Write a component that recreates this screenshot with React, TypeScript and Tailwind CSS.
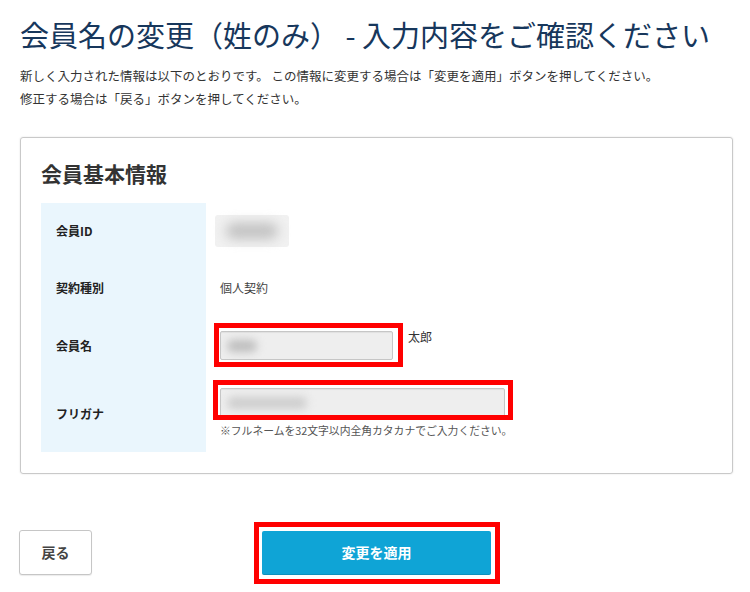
import React from 'react';

const Blur: React.FC<{ w: string; tone?: string }> = ({ w, tone = 'bg-[#c4c4c4]' }) => (
  <span className={`block h-[12px] rounded-full blur-[4px] ${w} ${tone}`} />
);

const App: React.FC = () => {
  return (
    <div className="w-[750px] h-[592px] overflow-hidden bg-white font-['Noto_Sans_CJK_JP','Noto_Sans',sans-serif] text-[#333]">
      <div className="pl-[20px] pr-[17px] pt-[14px]">
        {/* Title */}
        <h1 className="whitespace-nowrap text-[29px] leading-[40px] font-normal text-[#17375c]">
          会員名の変更（姓のみ） - 入力内容をご確認ください
        </h1>
        <p className="mt-[10px] whitespace-nowrap text-[12.5px] leading-[23px] text-[#333]">
          新しく入力された情報は以下のとおりです。 この情報に変更する場合は「変更を適用」ボタンを押してください。
          <br />
          修正する場合は「戻る」ボタンを押してください。
        </p>

        {/* Card */}
        <div className="mt-[27px] rounded-[3px] border border-[#c9c9c9] px-[20px] pt-[21px] pb-[21px] shadow-[0_0_2px_rgba(0,0,0,0.12)]">
          <h2 className="text-[21px] leading-[28px] font-bold text-[#333]">会員基本情報</h2>

          <div className="mt-[16px] grid grid-cols-[165px_1fr]">
            {/* 会員ID */}
            <div className="flex h-[56px] items-center bg-[#eaf6fd] pl-[15px] text-[12px] font-bold text-[#222]">会員ID</div>
            <div className="flex h-[56px] items-center pl-[9px]">
              <div className="flex h-[32px] w-[74px] items-center justify-center rounded-[3px] bg-[#f1f1f1]">
                <span className="block h-[16px] w-[52px] rounded-full bg-[#c2c2c2] blur-[6px]" />
              </div>
            </div>

            {/* 契約種別 */}
            <div className="flex h-[57px] items-center bg-[#eaf6fd] pl-[15px] text-[12px] font-bold text-[#222]">契約種別</div>
            <div className="flex h-[57px] items-center pl-[14px] text-[12px] text-[#444]">個人契約</div>

            {/* 会員名 */}
            <div className="flex h-[59px] items-center bg-[#eaf6fd] pl-[15px] text-[12px] font-bold text-[#222]">会員名</div>
            <div className="flex h-[59px] items-start pl-[14px] pt-[15px]">
              <div className="relative">
                <div className="flex h-[29px] w-[173px] items-center rounded-[2px] border border-[#c6c6c6] bg-[#eeeeee] pl-[6px] shadow-[inset_0_1px_1px_rgba(0,0,0,0.06)]">
                  <Blur w="w-[30px]" tone="bg-[#bdbdbd]" />
                </div>
                <span className="absolute -left-[6px] -top-[8px] -right-[10px] -bottom-[7px] border-[5px] border-[#ff0000]" />
              </div>
              <span className="ml-[15px] text-[12px] leading-[12px] text-[#333]">太郎</span>
            </div>

            {/* フリガナ */}
            <div className="flex h-[77px] items-center bg-[#eaf6fd] pl-[15px] text-[12px] font-bold text-[#222]">フリガナ</div>
            <div className="h-[77px] pl-[14px] pt-[13px]">
              <div className="relative w-[285px]">
                <div className="flex h-[29px] w-[285px] items-center rounded-[2px] border border-[#c6c6c6] bg-[#eeeeee] pl-[6px] shadow-[inset_0_1px_1px_rgba(0,0,0,0.06)]">
                  <Blur w="w-[80px]" tone="bg-[#cdcdcd]" />
                </div>
                <span className="absolute -left-[7px] -top-[8px] -right-[8px] -bottom-[3px] border-[5px] border-[#ff0000]" />
              </div>
              <p className="mt-[5px] whitespace-nowrap text-[10.8px] leading-[16px] text-[#555]">
                ※フルネームを32文字以内全角カタカナでご入力ください。
              </p>
            </div>
          </div>
        </div>

        {/* Buttons */}
        <div className="mt-[56px] grid grid-cols-[1fr_auto_1fr] items-center">
          <button className="-ml-[1px] h-[45px] w-[73px] justify-self-start rounded-[3px] border border-[#c6c6c6] bg-white text-[14px] font-bold text-[#444] shadow-[0_1px_1px_rgba(0,0,0,0.08)]">
            戻る
          </button>
          <div className="relative">
            <button className="h-[44px] w-[229px] rounded-[2px] bg-[#0fa4d6] text-[14px] font-bold text-white shadow-[inset_0_-1px_0_rgba(0,0,0,0.12)]">
              変更を適用
            </button>
            <span className="absolute -left-[8px] -top-[9px] -right-[9px] -bottom-[9px] border-[5px] border-[#ff0000]" />
          </div>
          <div />
        </div>
      </div>
    </div>
  );
};

export default App;
